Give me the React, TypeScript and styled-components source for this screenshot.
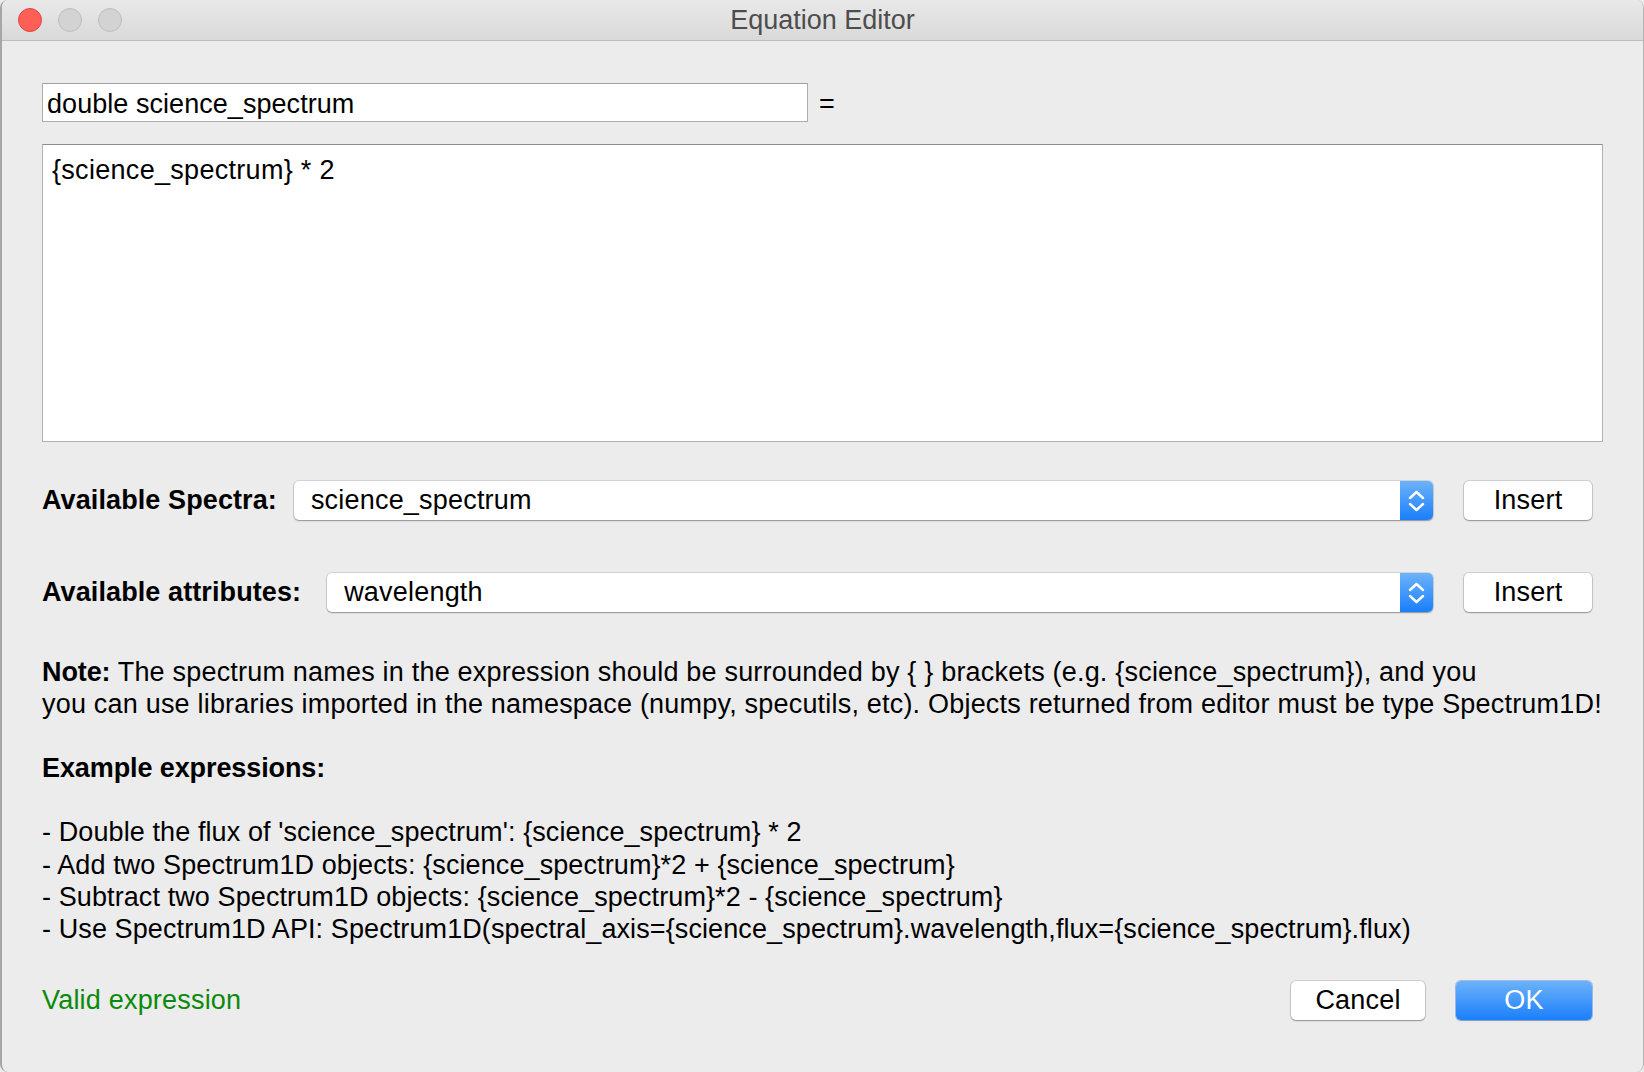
import styled, { createGlobalStyle } from 'styled-components';

const GlobalStyle = createGlobalStyle`
  html, body {
    margin: 0;
    padding: 0;
    background: #ececec;
  }
  body {
    font-family: "Liberation Sans", Arial, sans-serif;
    color: #000;
  }
  * {
    box-sizing: border-box;
  }
`;

const Window = styled.div`
  width: 1644px;
  height: 1072px;
  display: flex;
  flex-direction: column;
  background: #ececec;
  border-left: 2px solid #a6a6a6;
  border-right: 1px solid #b4b4b4;
  border-radius: 8px;
  overflow: hidden;
`;

const TitleBar = styled.div`
  height: 41px;
  flex-shrink: 0;
  display: grid;
  grid-template-columns: 1fr auto 1fr;
  align-items: center;
  background: linear-gradient(to bottom, #e9e9e9, #d9d9d9);
  border-bottom: 1px solid #bdbdbd;
`;

const Lights = styled.div`
  display: flex;
  gap: 16px;
  padding-left: 16px;
`;

const Light = styled.span<{ $color: string; $edge: string }>`
  width: 24px;
  height: 24px;
  border-radius: 50%;
  background: ${({ $color }) => $color};
  border: 1px solid ${({ $edge }) => $edge};
`;

const Title = styled.div`
  font-size: 27px;
  color: #4d4d4d;
  line-height: 1;
`;

const Body = styled.div`
  flex: 1;
  display: flex;
  flex-direction: column;
  padding: 42px 40px 0 40px;
  font-size: 27px;
  letter-spacing: 0.2px;
`;

const NameRow = styled.div`
  display: flex;
  align-items: center;
  gap: 11px;
`;

const NameInput = styled.input`
  width: 766px;
  height: 39px;
  padding: 4px 4px 0;
  border: 1px solid #adadad;
  border-top-color: #a0a0a0;
  background: #fff;
  font-family: inherit;
  font-size: 27px;
  letter-spacing: 0.05px;
  color: #000;
  outline: none;
`;

const Equals = styled.span`
  font-size: 27px;
  padding-top: 3px;
`;

const Editor = styled.textarea`
  margin-top: 22px;
  width: 100%;
  height: 298px;
  padding: 9px 9px;
  border: 1px solid #b1b1b1;
  border-top-color: #8e8e8e;
  background: #fff;
  font-family: inherit;
  font-size: 27px;
  letter-spacing: 0.3px;
  line-height: 32px;
  color: #000;
  resize: none;
  outline: none;
`;

const PickRow = styled.div<{ $top: number }>`
  margin-top: ${({ $top }) => $top}px;
  display: flex;
  align-items: center;
  padding-right: 11px;
  height: 40px;
`;

const PickLabel = styled.span<{ $gap: number }>`
  font-size: 27px;
  font-weight: bold;
  letter-spacing: 0.1px;
  margin-right: ${({ $gap }) => $gap}px;
  white-space: nowrap;
`;

const Combo = styled.div`
  flex: 1;
  height: 39px;
  display: flex;
  align-items: stretch;
  background: #fff;
  border-radius: 5px;
  box-shadow: 0 0 0 1px rgba(0, 0, 0, 0.1), 0 1px 1.5px rgba(0, 0, 0, 0.3);
  margin-right: 31px;
`;

const ComboText = styled.span`
  flex: 1;
  display: flex;
  align-items: center;
  padding-left: 17px;
`;

const ComboArrow = styled.span`
  width: 33px;
  display: flex;
  align-items: center;
  justify-content: center;
  border-radius: 0 5px 5px 0;
  background: linear-gradient(to bottom, #6cb2fa, #1a7ffb);
`;

const Button = styled.button<{ $primary?: boolean; $width: number }>`
  width: ${({ $width }) => $width}px;
  height: 39px;
  border: none;
  border-radius: 5px;
  font-family: inherit;
  font-size: 27px;
  letter-spacing: 0.2px;
  padding: 0;
  color: ${({ $primary }) => ($primary ? '#fff' : '#000')};
  background: ${({ $primary }) =>
    $primary ? 'linear-gradient(to bottom, #6cb2fa, #1b7ffb)' : '#fff'};
  box-shadow: ${({ $primary }) =>
    $primary
      ? '0 0 0 1px rgba(20, 100, 220, 0.35), 0 1px 1px rgba(0, 0, 0, 0.2)'
      : '0 0 0 1px rgba(0, 0, 0, 0.12), 0 1px 1.5px rgba(0, 0, 0, 0.3)'};
`;

const Info = styled.div`
  margin-top: 44px;
  line-height: 32.1px;
  white-space: nowrap;

  b {
    letter-spacing: -0.1px;
  }
`;

const Blank = styled.div`
  height: 32.1px;
`;

const Example = styled.div`
  letter-spacing: 0.1px;
`;

const Footer = styled.div`
  margin-top: 36px;
  display: flex;
  align-items: center;
  gap: 31px;
  padding-right: 11px;
`;

const Status = styled.span`
  flex: 1;
  color: #0a8a0a;
`;

const Stepper = () => (
  <svg width="33" height="39" viewBox="0 0 33 39">
    <path
      d="M10 17 L16.5 11 L23 17 M10 23 L16.5 29 L23 23"
      fill="none"
      stroke="#fff"
      strokeWidth="2.4"
      strokeLinecap="round"
      strokeLinejoin="round"
    />
  </svg>
);

const examples = [
  "- Double the flux of 'science_spectrum': {science_spectrum} * 2",
  '- Add two Spectrum1D objects: {science_spectrum}*2 + {science_spectrum}',
  '- Subtract two Spectrum1D objects: {science_spectrum}*2 - {science_spectrum}',
  '- Use Spectrum1D API: Spectrum1D(spectral_axis={science_spectrum}.wavelength,flux={science_spectrum}.flux)',
];

export default function App() {
  return (
    <>
      <GlobalStyle />
      <Window>
        <TitleBar>
          <Lights>
            <Light $color="#fe5f57" $edge="#e2463f" />
            <Light $color="#d3d3d3" $edge="#bdbdbd" />
            <Light $color="#d3d3d3" $edge="#bdbdbd" />
          </Lights>
          <Title>Equation Editor</Title>
          <span />
        </TitleBar>

        <Body>
          <NameRow>
            <NameInput defaultValue="double science_spectrum" />
            <Equals>=</Equals>
          </NameRow>

          <Editor defaultValue="{science_spectrum} * 2" spellCheck={false} />

          <PickRow $top={38}>
            <PickLabel $gap={17}>Available Spectra:</PickLabel>
            <Combo>
              <ComboText>science_spectrum</ComboText>
              <ComboArrow>
                <Stepper />
              </ComboArrow>
            </Combo>
            <Button $width={128}>Insert</Button>
          </PickRow>

          <PickRow $top={52}>
            <PickLabel $gap={26}>Available attributes:</PickLabel>
            <Combo>
              <ComboText>wavelength</ComboText>
              <ComboArrow>
                <Stepper />
              </ComboArrow>
            </Combo>
            <Button $width={128}>Insert</Button>
          </PickRow>

          <Info>
            <div>
              <b>Note:</b> The spectrum names in the expression should be surrounded by {'{ }'} brackets
              (e.g. {'{science_spectrum}'}), and you
            </div>
            <div>
              you can use libraries imported in the namespace (numpy, specutils, etc). Objects returned
              from editor must be type Spectrum1D!
            </div>
            <Blank />
            <div>
              <b>Example expressions:</b>
            </div>
            <Blank />
            {examples.map((line) => (
              <Example key={line}>{line}</Example>
            ))}
          </Info>

          <Footer>
            <Status>Valid expression</Status>
            <Button $width={134}>Cancel</Button>
            <Button $width={136} $primary>
              OK
            </Button>
          </Footer>
        </Body>
      </Window>
    </>
  );
}
